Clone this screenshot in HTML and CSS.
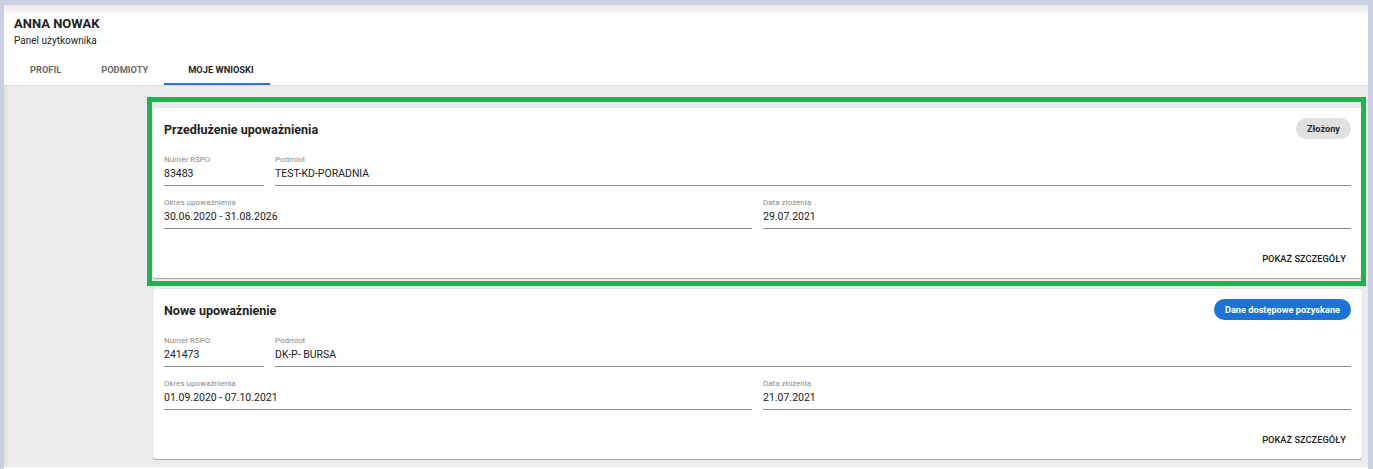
FILE: index.html
```html
<!DOCTYPE html>
<html lang="pl">
<head>
<meta charset="utf-8">
<title>Panel użytkownika</title>
<link rel="stylesheet" href="styles.css">
</head>
<body>
<div class="window">
  <header class="header">
    <div class="user-name">ANNA NOWAK</div>
    <div class="user-sub">Panel użytkownika</div>
    <nav class="tabs">
      <a class="tab">PROFIL</a>
      <a class="tab">PODMIOTY</a>
      <a class="tab active">MOJE WNIOSKI</a>
    </nav>
  </header>
  <main class="main">
    <section class="card">
      <div class="highlight"></div>
      <div class="card-head">
        <h2 class="card-title">Przedłużenie upoważnienia</h2>
        <span class="chip chip-grey">Złożony</span>
      </div>
      <div class="row row-a">
        <div class="field field-num"><div class="label">Numer RSPO</div><div class="value">83483</div></div>
        <div class="field field-grow"><div class="label">Podmiot</div><div class="value">TEST-KD-PORADNIA</div></div>
      </div>
      <div class="row row-b">
        <div class="field field-half"><div class="label">Okres upoważnienia</div><div class="value">30.06.2020 - 31.08.2026</div></div>
        <div class="field field-half"><div class="label">Data złożenia</div><div class="value">29.07.2021</div></div>
      </div>
      <div class="actions"><button class="btn">POKAŻ SZCZEGÓŁY</button></div>
    </section>
    <section class="card">
      <div class="card-head">
        <h2 class="card-title">Nowe upoważnienie</h2>
        <span class="chip chip-blue">Dane dostępowe pozyskane</span>
      </div>
      <div class="row row-a">
        <div class="field field-num"><div class="label">Numer RSPO</div><div class="value">241473</div></div>
        <div class="field field-grow"><div class="label">Podmiot</div><div class="value">DK-P- BURSA</div></div>
      </div>
      <div class="row row-b">
        <div class="field field-half"><div class="label">Okres upoważnienia</div><div class="value">01.09.2020 - 07.10.2021</div></div>
        <div class="field field-half"><div class="label">Data złożenia</div><div class="value">21.07.2021</div></div>
      </div>
      <div class="actions"><button class="btn">POKAŻ SZCZEGÓŁY</button></div>
    </section>
  </main>
</div>
</body>
</html>
```
FILE: styles.css
```css
* { box-sizing: border-box; }
html, body { margin: 0; padding: 0; }
body {
  background: #c8d0e1;
  font-family: Roboto, "Liberation Sans", sans-serif;
  color: #212121;
  height: 469px;
  overflow: hidden;
}
.window {
  margin: 5px 5px 0 4px;
  height: 464px;
  background: #fff;
  display: flex;
  flex-direction: column;
}
.header {
  background: linear-gradient(#e8e8e8 0, #fff 11px);
  padding: 11px 0 0 10px;
  border-bottom: 1px solid #dcdcdc;
}
.user-name {
  font-size: 13px;
  font-weight: 700;
  line-height: 16px;
  color: #222;
}
.user-sub {
  font-size: 10px;
  line-height: 13px;
  margin-top: 2px;
  color: #222;
}
.tabs {
  display: flex;
  margin-top: 8px;
  margin-left: -4px;
}
.tab {
  display: block;
  height: 30px;
  line-height: 30px;
  padding: 0 20px;
  font-size: 9.3px;
  font-weight: 700;
  color: #6a6a6a;
  cursor: pointer;
}
.tab.active {
  color: #1f1f1f;
  box-shadow: inset 0 -2px 0 #2f6fcf;
  margin-left: -4px;
  padding: 0 16px 0 24px;
}
.main {
  flex: 0 0 381px;
  background: #ececec;
  padding: 22px 6px 8px 149px;
  display: flex;
  flex-direction: column;
  gap: 11px;
  box-shadow: inset 5px 0 5px -4px rgba(0,0,0,0.08);
}
.card {
  position: relative;
  height: 170px;
  background: #fff;
  border-radius: 3px;
  box-shadow: 0 1px 1px rgba(0,0,0,0.3), 0 0 1px rgba(0,0,0,0.12);
  padding: 10px 11px 0;
}
.highlight {
  position: absolute;
  top: -11px;
  left: -6px;
  right: -4px;
  bottom: -8px;
  border: 5px solid #22b14c;
  pointer-events: none;
}
.card-head {
  display: flex;
  justify-content: space-between;
  align-items: flex-start;
  height: 24px;
}
.card-title {
  margin: 0;
  padding-top: 1px;
  font-size: 12.5px;
  line-height: 21px;
  font-weight: 700;
  color: #222;
}
.chip {
  height: 21px;
  line-height: 21px;
  padding: 0 11px;
  border-radius: 11px;
  font-size: 9.2px;
  font-weight: 700;
}
.chip-grey { background: #e0e0e0; color: #2a2a2a; }
.chip-blue { background: #1b74d4; color: #fff; }
.row {
  display: flex;
  gap: 11px;
}
.row-a { margin-top: 13px; }
.row-b { margin-top: 12px; }
.field {
  padding-bottom: 4px;
  border-bottom: 1px solid #8c8c8c;
}
.field-num { flex: 0 0 100px; }
.field-grow { flex: 1 1 auto; }
.field-half { flex: 1 1 0; }
.label {
  font-size: 8px;
  line-height: 10px;
  color: #8a8a8a;
}
.value {
  margin-top: 2px;
  font-size: 10.5px;
  line-height: 14px;
  color: #222;
}
.actions {
  display: flex;
  justify-content: flex-end;
  margin-top: 18px;
}
.btn {
  border: 0;
  background: transparent;
  font-family: inherit;
  font-size: 9.3px;
  font-weight: 500;
  line-height: 24px;
  height: 24px;
  padding: 0 5px;
  color: #222;
  cursor: pointer;
}
```
